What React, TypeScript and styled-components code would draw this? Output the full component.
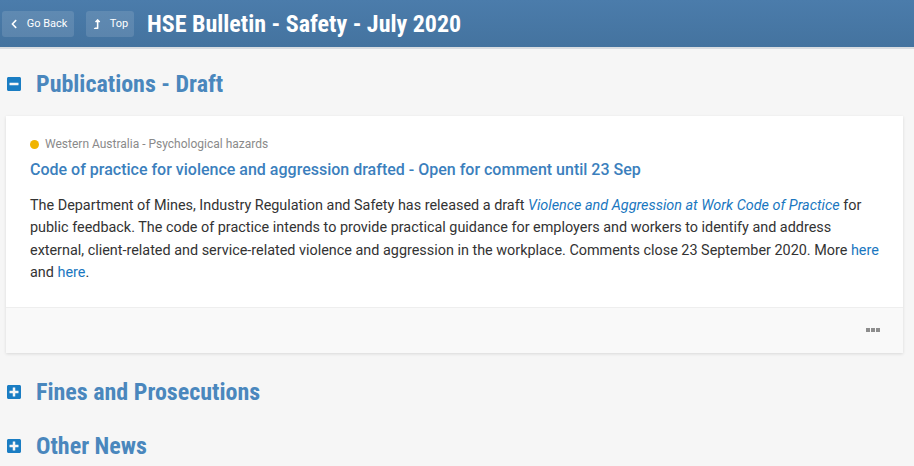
import React from "react";
import styled, { createGlobalStyle } from "styled-components";
import { FaChevronLeft, FaLevelUpAlt, FaMinusSquare, FaPlusSquare } from "react-icons/fa";

const GlobalStyle = createGlobalStyle`
  html, body {
    margin: 0;
    padding: 0;
    background: #f6f6f6;
    font-family: Roboto, "Liberation Sans", sans-serif;
  }
`;

const condensed = `"Roboto Condensed", "Liberation Sans Narrow", Roboto, sans-serif`;

const Page = styled.div`
  width: 914px;
  min-height: 466px;
  background: #f6f6f6;
`;

const Header = styled.header`
  height: 47px;
  display: flex;
  align-items: center;
  gap: 12px;
  padding: 0 2px;
  background: linear-gradient(#4b7cab, #44739f);
  border-bottom: 2px solid #d9dde1;
`;

const NavButton = styled.button<{ $width: number }>`
  display: flex;
  align-items: center;
  justify-content: center;
  gap: 8px;
  width: ${(p) => p.$width}px;
  height: 26px;
  padding: 0;
  border: none;
  border-radius: 3px;
  background: rgba(255, 255, 255, 0.12);
  color: #fff;
  font-family: Roboto, sans-serif;
  font-size: 11px;
  cursor: pointer;
  svg {
    font-size: 10px;
  }
`;

const Title = styled.h1`
  margin: 0 0 0 1px;
  color: #fff;
  font-family: ${condensed};
  font-size: 24px;
  font-weight: 700;
`;

const SectionHead = styled.div<{ $top?: number }>`
  display: flex;
  align-items: center;
  gap: 14px;
  padding: 0 6px;
  height: 54px;
  margin-top: ${(p) => p.$top ?? 0}px;
  color: #4a87bd;
  font-family: ${condensed};
  font-size: 24px;
  font-weight: 700;
  svg {
    color: #1a7dc3;
    font-size: 16px;
  }
`;

const Card = styled.article`
  margin: 5px 11px 12px 6px;
  background: #fff;
  box-shadow: 0 1px 3px rgba(0, 0, 0, 0.12);
`;

const CardBody = styled.div`
  padding: 21px 24px 22px;
`;

const Tag = styled.div`
  display: flex;
  align-items: center;
  gap: 6px;
  color: #8a8a8a;
  font-size: 12px;
`;

const Dot = styled.span`
  width: 9px;
  height: 9px;
  border-radius: 50%;
  background: #f0b400;
`;

const ItemTitle = styled.a`
  display: block;
  margin-top: 9px;
  color: #3b7fbd;
  font-size: 16px;
  font-weight: 500;
  text-decoration: none;
`;

const Text = styled.p`
  margin: 16px 0 0;
  color: #333;
  font-size: 14.4px;
  line-height: 22.4px;
`;

const Link = styled.a<{ $italic?: boolean }>`
  color: #1a77c0;
  text-decoration: none;
  font-style: ${(p) => (p.$italic ? "italic" : "normal")};
`;

const CardFooter = styled.div`
  height: 45px;
  display: flex;
  align-items: center;
  justify-content: flex-end;
  padding-right: 23px;
  background: #f9f9f9;
  border-top: 1px solid #eeeeee;
`;

const More = styled.div`
  display: flex;
  gap: 1px;
  span {
    width: 4px;
    height: 4px;
    background: #8d8d8d;
  }
`;

export default function App() {
  return (
    <Page>
      <GlobalStyle />
      <Header>
        <NavButton $width={72}>
          <FaChevronLeft />
          Go Back
        </NavButton>
        <NavButton $width={48}>
          <FaLevelUpAlt />
          Top
        </NavButton>
        <Title>HSE Bulletin - Safety - July 2020</Title>
      </Header>

      <SectionHead $top={8}>
        <FaMinusSquare />
        Publications - Draft
      </SectionHead>
      <Card>
        <CardBody>
          <Tag>
            <Dot />
            Western Australia - Psychological hazards
          </Tag>
          <ItemTitle href="#">
            Code of practice for violence and aggression drafted - Open for comment until 23 Sep
          </ItemTitle>
          <Text>
            The Department of Mines, Industry Regulation and Safety has released a draft{" "}
            <Link $italic href="#">
              Violence and Aggression at Work Code of Practice
            </Link>{" "}
            for public feedback. The code of practice intends to provide practical guidance for
            employers and workers to identify and address external, client-related and
            service-related violence and aggression in the workplace. Comments close 23 September
            2020. More <Link href="#">here</Link> and <Link href="#">here</Link>.
          </Text>
        </CardBody>
        <CardFooter>
          <More>
            <span />
            <span />
            <span />
          </More>
        </CardFooter>
      </Card>

      <SectionHead $top={9}>
        <FaPlusSquare />
        Fines and Prosecutions
      </SectionHead>
      <SectionHead>
        <FaPlusSquare />
        Other News
      </SectionHead>
    </Page>
  );
}
